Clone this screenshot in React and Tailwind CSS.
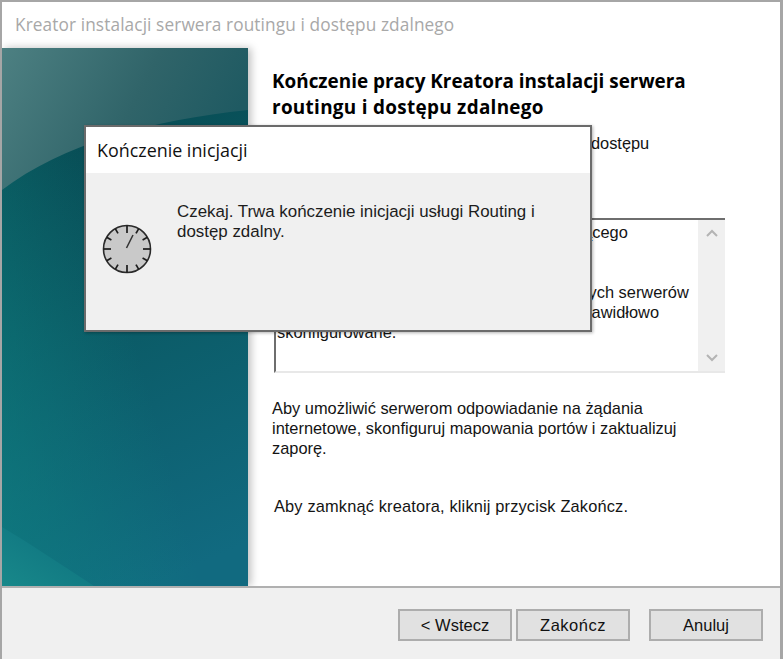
const SANS = { fontFamily: '"Liberation Sans", Arial, sans-serif' }

// dial ticks, every 30 degrees, long ones on the quarters
const TICKS = Array.from({ length: 12 }, (_, i) => i * 30)

function ClockIcon() {
  return (
    <svg width="52" height="52" viewBox="0 0 52 52" className="shrink-0">
      <circle cx="26" cy="26" r="23.5" fill="#c9c9c9" stroke="#2a2a2a" strokeWidth="1.6" />
      {TICKS.map(a => (
        <line
          key={a}
          x1="26"
          y1="2.5"
          x2="26"
          y2={a % 90 === 0 ? 10 : 8}
          stroke="#1c1c1c"
          strokeWidth="1.7"
          transform={`rotate(${a} 26 26)`}
        />
      ))}
      <line x1="25.5" y1="25" x2="32" y2="12" stroke="#333" strokeWidth="1.5" />
    </svg>
  )
}

function WizardArt() {
  return (
    <svg className="w-full h-full block" viewBox="0 0 246 538" preserveAspectRatio="none">
      <defs>
        <linearGradient id="base" x1="0.4" y1="0" x2="0.6" y2="1">
          <stop offset="0" stopColor="#07484f" />
          <stop offset="0.45" stopColor="#0a5963" />
          <stop offset="1" stopColor="#116a80" />
        </linearGradient>
        <linearGradient id="gloss" x1="0" y1="0" x2="1" y2="0.3">
          <stop offset="0" stopColor="#4d8082" />
          <stop offset="0.6" stopColor="#306469" />
          <stop offset="1" stopColor="#1f5a62" />
        </linearGradient>
        <linearGradient id="corner" x1="0" y1="1" x2="0.8" y2="0.2">
          <stop offset="0" stopColor="#18888a" />
          <stop offset="1" stopColor="#0f7480" />
        </linearGradient>
        <linearGradient id="leftGlow" x1="0" y1="1" x2="1" y2="0.4">
          <stop offset="0" stopColor="#0f8584" stopOpacity="0.6" />
          <stop offset="0.6" stopColor="#0f8584" stopOpacity="0" />
        </linearGradient>
      </defs>
      <rect width="246" height="538" fill="url(#base)" />
      <rect width="246" height="538" fill="url(#leftGlow)" />
      <path d="M0 0H246V62C150 72 60 96 0 142Z" fill="url(#gloss)" />
      <path d="M0 479C30 497 60 517 92 538H0Z" fill="url(#corner)" />
    </svg>
  )
}

function WizardButton({ children }) {
  return (
    <button className="w-[114px] h-[32px] bg-[#e1e1e1] border-2 border-[#adadad] text-[16.5px] text-[#111]">
      {children}
    </button>
  )
}

export default function App() {
  return (
    <div
      className="relative w-[783px] h-[659px] overflow-hidden bg-white border-t-2 border-l-2 border-r-[3px] border-[#a6a6a6] flex flex-col"
      style={SANS}
    >
      {/* Title bar */}
      <div
        className="h-[46px] shrink-0 flex items-center pl-[13px] text-[17.25px] text-[#a8a8a8] tracking-[0.1px]"
        style={{ fontFamily: '"Open Sans", sans-serif' }}
      >
        Kreator instalacji serwera routingu i dostępu zdalnego
      </div>

      {/* Wizard body */}
      <div className="flex-1 min-h-0 flex">
        <div className="w-[246px] shrink-0 shadow-[3px_0_8px_rgba(0,0,0,0.25)]">
          <WizardArt />
        </div>
        <div className="flex-1 pl-[24px] pt-[20px] text-[16.4px] leading-[20px] text-[#141414]">
          <h1
            className="text-[18.9px] font-bold leading-[26px] text-black whitespace-nowrap"
            style={{ fontFamily: '"Open Sans", sans-serif' }}
          >
            Kończenie pracy Kreatora instalacji serwera
            <br />
            <span className="tracking-[0.3px]">routingu i dostępu zdalnego</span>
          </h1>
          <p className="mt-[13px] whitespace-nowrap">
            Skonfigurowano serwer routingu i zdalnego dostępu
            <br />
            zdalnego.
          </p>

          {/* Summary list */}
          <div className="mt-[45px] ml-[2px] w-[451px] h-[155px] flex border-t-2 border-l-2 border-[#6e6e6e] border-b-2 border-b-[#e8e8e8]">
            <div className="flex-1 pl-[1px] pt-[2px] whitespace-nowrap">
              Usługa routingu dla tego serwera obsługującego
              <br />
              <br />
              <br />
              Upewnij się, że adresy wszystkich publicznych serwerów
              <br />
              i adresy klientów usługi NAT zostały tutaj prawidłowo
              <br />
              skonfigurowane.
            </div>
            <div className="w-[27px] bg-[#f0f0f0] flex flex-col items-center justify-between py-[8px] text-[#b4b4b4]">
              <svg width="14" height="10" viewBox="0 0 14 10" fill="none" stroke="currentColor" strokeWidth="2">
                <path d="M2 8l5-5 5 5" />
              </svg>
              <svg width="14" height="10" viewBox="0 0 14 10" fill="none" stroke="currentColor" strokeWidth="2">
                <path d="M2 2l5 5 5-5" />
              </svg>
            </div>
          </div>

          <p className="mt-[25px] whitespace-nowrap">
            Aby umożliwić serwerom odpowiadanie na żądania
            <br />
            internetowe, skonfiguruj mapowania portów i zaktualizuj
            <br />
            zaporę.
          </p>
          <p className="mt-[38px] ml-[2px] whitespace-nowrap tracking-[0.15px]">
            Aby zamknąć kreatora, kliknij przycisk Zakończ.
          </p>
        </div>
      </div>

      {/* Footer */}
      <div className="h-[73px] shrink-0 bg-[#f0f0f0] border-t-2 border-[#b0b0b0] flex items-start pt-[21px] pl-[396px]">
        <WizardButton>&lt; Wstecz</WizardButton>
        <div className="ml-[4px]">
          <WizardButton>
            <span className="tracking-[0.5px]">Zakończ</span>
          </WizardButton>
        </div>
        <div className="ml-[19px]">
          <WizardButton>Anuluj</WizardButton>
        </div>
      </div>

      {/* Progress dialog on top of the wizard */}
      <div className="absolute left-[82px] top-[123px] w-[508px] h-[207px] flex flex-col bg-[#f0f0f0] border-2 border-[#6b6b6b] shadow-[1px_1px_3px_rgba(0,0,0,0.3)]">
        <div
          className="h-[46px] shrink-0 bg-white flex items-center pl-[11px] text-[17.9px] text-[#111]"
          style={{ fontFamily: '"Open Sans", sans-serif' }}
        >
          Kończenie inicjacji
        </div>
        <div className="flex items-start pl-[15px] text-[16.9px] leading-[20px] text-[#1c1c1c]">
          <div className="mt-[50px]">
            <ClockIcon />
          </div>
          <p className="ml-[24px] mt-[29px] whitespace-nowrap">
            Czekaj. Trwa kończenie inicjacji usługi Routing i
            <br />
            dostęp zdalny.
          </p>
        </div>
      </div>
    </div>
  )
}
